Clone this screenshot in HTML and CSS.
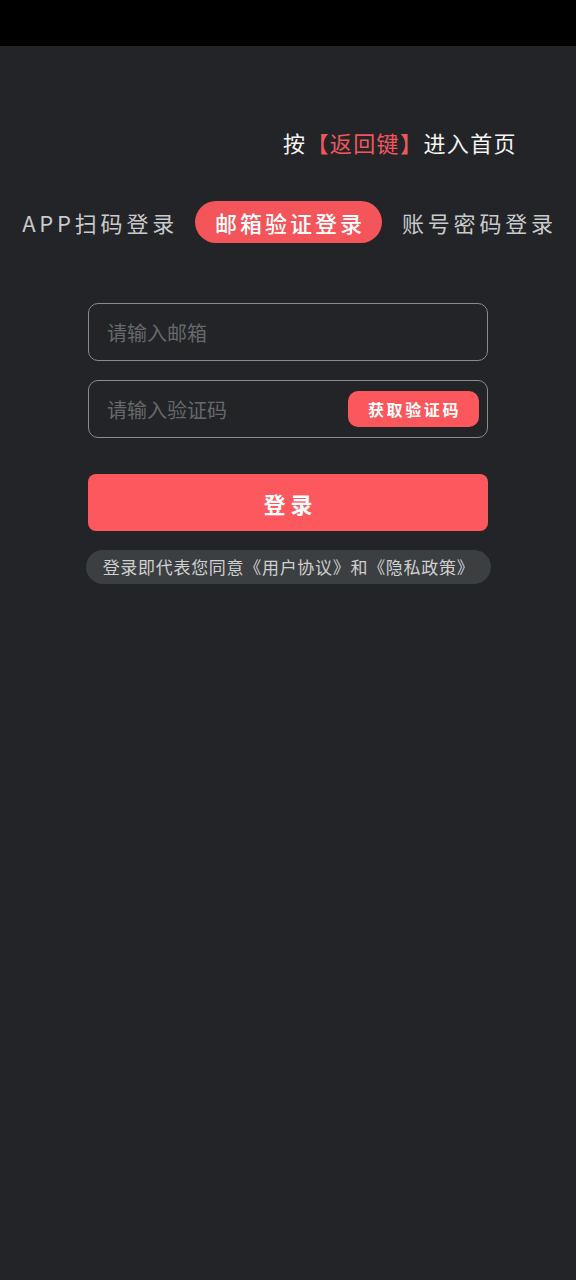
FILE: index.html
```html
<!DOCTYPE html>
<html lang="zh-CN">
<head>
    <meta charset="UTF-8">
    <meta name="viewport" content="width=device-width, initial-scale=1.0">
    <title>登录</title>
    <link rel="stylesheet" href="styles.css">
</head>
<body>
    <div class="status-bar"></div>

    <div class="page">
        <p class="back-tip">按<span class="hl">【返回键】</span>进入首页</p>

        <div class="tabs">
            <span class="tab">APP扫码登录</span>
            <span class="tab active">邮箱验证登录</span>
            <span class="tab">账号密码登录</span>
        </div>

        <form class="form" onsubmit="return false">
            <div class="field">
                <input type="text" placeholder="请输入邮箱">
            </div>
            <div class="field">
                <input type="text" placeholder="请输入验证码">
                <button type="button" class="code-btn">获取验证码</button>
            </div>
            <button type="submit" class="login-btn">登录</button>
            <div class="agree">登录即代表您同意《用户协议》和《隐私政策》</div>
        </form>
    </div>
</body>
</html>
```

FILE: styles.css
```css
html, body {
    margin: 0;
    padding: 0;
}
body {
    font-family: "Noto Sans CJK SC", "Noto Sans", sans-serif;
    background-color: #222427;
    color: #ffffff;
    min-height: 1280px;
}
.status-bar {
    height: 46px;
    background-color: #000000;
}
.page {
    padding-top: 81px;
}
.back-tip {
    margin: 0;
    padding-right: 59px;
    text-align: right;
    font-size: 22px;
    line-height: 30px;
    letter-spacing: 1.4px;
    color: #f4f4f4;
}
.hl {
    color: #f0575c;
}
.tabs {
    display: flex;
    justify-content: center;
    align-items: center;
    gap: 17px;
    margin-top: 44px;
}
.tab {
    font-size: 22px;
    line-height: 42px;
    letter-spacing: 3.8px;
    color: #c9cacb;
    padding: 0 0 0 3px;
    white-space: nowrap;
}
.tab.active {
    background-color: #f4555a;
    color: #ffffff;
    font-weight: 500;
    letter-spacing: 3px;
    border-radius: 21px;
    padding: 0 17px 0 20px;
}
.form {
    width: 400px;
    margin: 60px auto 0;
    display: flex;
    flex-direction: column;
}
.field {
    display: flex;
    align-items: center;
    height: 58px;
    box-sizing: border-box;
    border: 1.5px solid #8a8b8d;
    border-radius: 10px;
    padding: 0 8px 0 18px;
    margin-bottom: 19px;
}
.field input {
    flex: 1;
    min-width: 0;
    background: transparent;
    border: none;
    outline: none;
    font-family: inherit;
    font-size: 20px;
    color: #ffffff;
    padding: 0;
}
.field input::placeholder {
    color: #66686b;
}
.code-btn {
    width: 131px;
    height: 36px;
    border: none;
    border-radius: 10px;
    background-color: #fb575c;
    color: #ffffff;
    font-family: inherit;
    font-size: 16px;
    font-weight: 700;
    letter-spacing: 2.6px;
    padding: 0 0 0 2px;
}
.login-btn {
    margin-top: 17px;
    height: 57px;
    border: none;
    border-radius: 8px;
    background-color: #fd585d;
    color: #ffffff;
    font-family: inherit;
    font-size: 22px;
    font-weight: 700;
    letter-spacing: 5px;
    padding: 0 0 0 5px;
}
.agree {
    margin: 19px -3px 0 -2px;
    height: 34px;
    line-height: 34px;
    border-radius: 17px;
    background-color: #3c3f42;
    color: #cfd0d1;
    font-size: 17px;
    text-align: center;
    letter-spacing: 0.7px;
}
```
